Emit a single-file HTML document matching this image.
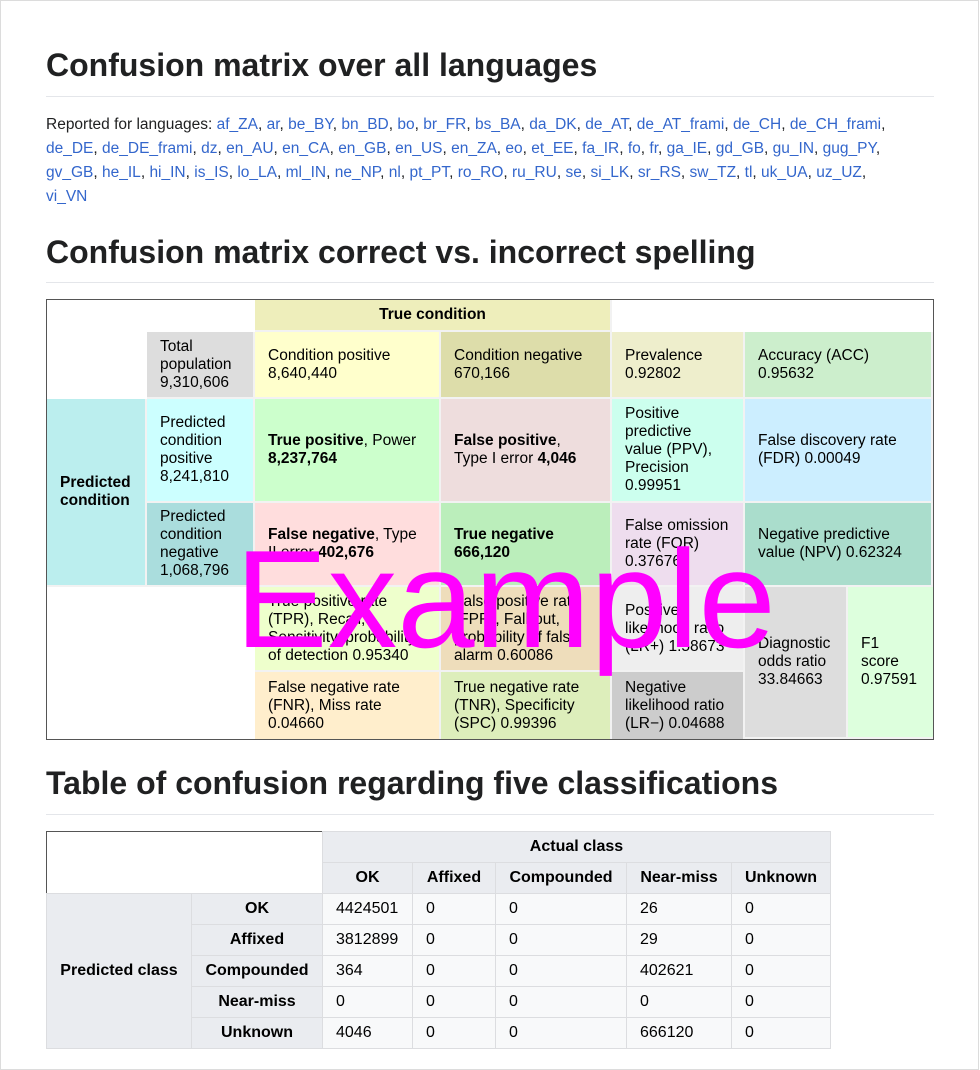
<!DOCTYPE html>
<html><head><meta charset="utf-8"><style>
*{margin:0;padding:0;box-sizing:border-box}
body{width:980px;height:1060px;background:#fff;font-family:"Liberation Sans",Arial,sans-serif;color:#202122;position:relative;overflow:hidden}
.frame{position:absolute;left:0;top:0;width:979px;height:1070px;border:1px solid #dcdcdc}
h2{position:absolute;left:46px;font-size:32px;font-weight:bold;color:#202122;width:888px;border-bottom:1px solid #e4e6ea;line-height:38px}
.p{position:absolute;left:46px;top:113px;width:872px;font-size:15.5px;line-height:24px}
.p a{color:#3366cc;text-decoration:none}
.m{position:absolute;left:46px;top:299px;width:888px;height:441px;border:1px solid #555;background:#fff}
.c{position:absolute;font-size:15.5px;line-height:18px;padding-left:13px;display:flex;align-items:center;color:#000;border-right:2px solid #f2f2f2;border-bottom:2px solid #f2f2f2}
.c span{display:block}
b{font-weight:bold}
.ex{position:absolute;left:235px;top:520px;font-size:139px;line-height:160px;color:#ff00ff;font-family:"Liberation Sans",sans-serif;font-weight:normal}
table{position:absolute;left:46px;top:831px;border-collapse:collapse;border:1px solid #555;font-size:16px}
td,th{border:1px solid #dcdde0;height:31px;padding:0 13px;text-align:left;font-weight:normal;color:#000}
th{background:#eaecf0;font-weight:bold;text-align:center}
td{background:#f8f9fa}
</style></head><body>
<div class="frame"></div>
<h2 style="top:46px;height:51px">Confusion matrix over all languages</h2>
<div class="p">Reported for languages: <a>af_ZA</a>, <a>ar</a>, <a>be_BY</a>, <a>bn_BD</a>, <a>bo</a>, <a>br_FR</a>, <a>bs_BA</a>, <a>da_DK</a>, <a>de_AT</a>, <a>de_AT_frami</a>, <a>de_CH</a>, <a>de_CH_frami</a>, <a>de_DE</a>, <a>de_DE_frami</a>, <a>dz</a>, <a>en_AU</a>, <a>en_CA</a>, <a>en_GB</a>, <a>en_US</a>, <a>en_ZA</a>, <a>eo</a>, <a>et_EE</a>, <a>fa_IR</a>, <a>fo</a>, <a>fr</a>, <a>ga_IE</a>, <a>gd_GB</a>, <a>gu_IN</a>, <a>gug_PY</a>, <a>gv_GB</a>, <a>he_IL</a>, <a>hi_IN</a>, <a>is_IS</a>, <a>lo_LA</a>, <a>ml_IN</a>, <a>ne_NP</a>, <a>nl</a>, <a>pt_PT</a>, <a>ro_RO</a>, <a>ru_RU</a>, <a>se</a>, <a>si_LK</a>, <a>sr_RS</a>, <a>sw_TZ</a>, <a>tl</a>, <a>uk_UA</a>, <a>uz_UZ</a>,<br><a>vi_VN</a></div>
<h2 style="top:233px;height:50px">Confusion matrix correct vs. incorrect spelling</h2>
<div class="m">
<div class="c" style="left:208px;top:0;width:357px;height:32px;background:#eeeebb;justify-content:center;padding:0"><b>True condition</b></div>
<div class="c" style="left:100px;top:32px;width:108px;height:67px;background:#dddddd"><span>Total<br>population<br>9,310,606</span></div>
<div class="c" style="left:208px;top:32px;width:186px;height:67px;background:#ffffcc"><span>Condition positive<br>8,640,440</span></div>
<div class="c" style="left:394px;top:32px;width:171px;height:67px;background:#ddddaa"><span>Condition negative<br>670,166</span></div>
<div class="c" style="left:565px;top:32px;width:133px;height:67px;background:#eeeecc"><span>Prevalence<br>0.92802</span></div>
<div class="c" style="left:698px;top:32px;width:188px;height:67px;background:#cceecc"><span>Accuracy (ACC)<br>0.95632</span></div>
<div class="c" style="left:0;top:99px;width:100px;height:188px;background:#bbeeee"><b>Predicted<br>condition</b></div>
<div class="c" style="left:100px;top:99px;width:108px;height:104px;background:#ccffff"><span>Predicted<br>condition<br>positive<br>8,241,810</span></div>
<div class="c" style="left:208px;top:99px;width:186px;height:104px;background:#ccffcc"><span><b>True positive</b>, Power<br><b>8,237,764</b></span></div>
<div class="c" style="left:394px;top:99px;width:171px;height:104px;background:#eedddd"><span><b>False positive</b>,<br>Type I error <b>4,046</b></span></div>
<div class="c" style="left:565px;top:99px;width:133px;height:104px;background:#ccffee"><span>Positive<br>predictive<br>value (PPV),<br>Precision<br>0.99951</span></div>
<div class="c" style="left:698px;top:99px;width:188px;height:104px;background:#cceeff"><span>False discovery rate<br>(FDR) 0.00049</span></div>
<div class="c" style="left:100px;top:203px;width:108px;height:84px;background:#aadddd"><span>Predicted<br>condition<br>negative<br>1,068,796</span></div>
<div class="c" style="left:208px;top:203px;width:186px;height:84px;background:#ffdddd"><span><b>False negative</b>, Type<br>II error <b>402,676</b></span></div>
<div class="c" style="left:394px;top:203px;width:171px;height:84px;background:#bbeebb"><span><b>True negative</b><br><b>666,120</b></span></div>
<div class="c" style="left:565px;top:203px;width:133px;height:84px;background:#eeddee"><span>False omission<br>rate (FOR)<br>0.37676</span></div>
<div class="c" style="left:698px;top:203px;width:188px;height:84px;background:#aaddcc"><span>Negative predictive<br>value (NPV) 0.62324</span></div>
<div class="c" style="left:208px;top:287px;width:186px;height:85px;background:#eeffcc"><span>True positive rate<br>(TPR), Recall,<br>Sensitivity, probability<br>of detection 0.95340</span></div>
<div class="c" style="left:394px;top:287px;width:171px;height:85px;background:#eeddbb"><span>False positive rate<br>(FPR), Fall-out,<br>probability of false<br>alarm 0.60086</span></div>
<div class="c" style="left:565px;top:287px;width:133px;height:85px;background:#eeeeee"><span>Positive<br>likelihood ratio<br>(LR+) 1.58673</span></div>
<div class="c" style="left:698px;top:287px;width:103px;height:152px;background:#dddddd"><span>Diagnostic<br>odds ratio<br>33.84663</span></div>
<div class="c" style="left:801px;top:287px;width:85px;height:152px;background:#ddffdd;border-right:0"><span>F1<br>score<br>0.97591</span></div>
<div class="c" style="left:208px;top:372px;width:186px;height:67px;background:#ffeecc;border-bottom:0"><span>False negative rate<br>(FNR), Miss rate<br>0.04660</span></div>
<div class="c" style="left:394px;top:372px;width:171px;height:67px;background:#ddeebb;border-bottom:0"><span>True negative rate<br>(TNR), Specificity<br>(SPC) 0.99396</span></div>
<div class="c" style="left:565px;top:372px;width:133px;height:67px;background:#cccccc;border-bottom:0"><span>Negative<br>likelihood ratio<br>(LR−) 0.04688</span></div>
</div>
<div class="ex">Example</div>
<h2 style="top:764px;height:51px">Table of confusion regarding five classifications</h2>
<table>
<tr><td colspan="2" rowspan="2" style="background:#fff;border-top:1px solid #555;border-left:1px solid #555"></td><th colspan="5">Actual class</th></tr>
<tr><th style="width:90px">OK</th><th style="width:83px">Affixed</th><th style="width:131px">Compounded</th><th style="width:105px">Near-miss</th><th style="width:98px">Unknown</th></tr>
<tr><th rowspan="5" style="width:145px">Predicted class</th><th style="width:131px">OK</th><td>4424501</td><td>0</td><td>0</td><td>26</td><td>0</td></tr>
<tr><th>Affixed</th><td>3812899</td><td>0</td><td>0</td><td>29</td><td>0</td></tr>
<tr><th>Compounded</th><td>364</td><td>0</td><td>0</td><td>402621</td><td>0</td></tr>
<tr><th>Near-miss</th><td>0</td><td>0</td><td>0</td><td>0</td><td>0</td></tr>
<tr><th>Unknown</th><td>4046</td><td>0</td><td>0</td><td>666120</td><td>0</td></tr>
</table>
</body></html>
